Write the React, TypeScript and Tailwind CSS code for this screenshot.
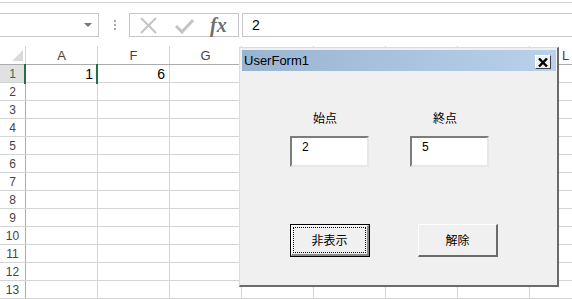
import React from 'react';

const cols = ['A', 'F', 'G', '', '', '', '', 'L'];
const rows = Array.from({ length: 13 }, (_, i) => i + 1);

function FormulaBar() {
  return (
    <div className="h-[46px] flex flex-col">
      <div className="h-[2px]" />
      <div className="h-px bg-[#d4d4d4]" />
      <div className="mt-[10px] h-[24px] flex items-stretch">
        <div className="w-[99px] shrink-0 border-y border-r border-[#c6c6c6] flex items-center justify-end pr-[6px]">
          <svg width="8" height="4" viewBox="0 0 8 4">
            <polygon points="0,0 8,0 4,4" fill="#767676" />
          </svg>
        </div>
        <div className="w-[30px] shrink-0 flex items-center justify-center">
          <svg width="3" height="12" viewBox="0 0 3 12">
            <rect x="1" y="1" width="2" height="2" fill="#a8a8a8" />
            <rect x="1" y="5" width="2" height="2" fill="#a8a8a8" />
            <rect x="1" y="9" width="2" height="2" fill="#a8a8a8" />
          </svg>
        </div>
        <div className="w-[110px] shrink-0 border border-[#c6c6c6] relative">
          <svg className="absolute left-[10px] top-[3px]" width="18" height="17" viewBox="0 0 18 17">
            <path d="M1 1 L16 16 M16 1 L1 16" stroke="#c4c4c4" strokeWidth="2" fill="none" />
          </svg>
          <svg className="absolute left-[45px] top-[4px]" width="19" height="16" viewBox="0 0 19 16">
            <path d="M1 8 L7 14 L18 2" stroke="#c4c4c4" strokeWidth="3" fill="none" />
          </svg>
          <span className="absolute left-[80px] top-[-1px] font-['Liberation_Serif',serif] italic font-bold text-[20px] leading-[24px] text-[#6f6f6f]">
            fx
          </span>
        </div>
        <div className="ml-[3px] w-[400px] shrink-0 border border-[#c6c6c6] flex items-center pl-[9px] font-['Liberation_Sans',sans-serif] text-[14px] text-black">
          2
        </div>
      </div>
      <div className="flex-1" />
    </div>
  );
}

function Grid() {
  return (
    <div className="relative font-['Liberation_Sans',sans-serif]">
      <div className="flex h-[19px] border-b border-[#ababab]">
        <div className="w-[26px] shrink-0 border-r border-[#d4d4d4] relative">
          <svg className="absolute left-[12px] top-[4px]" width="11" height="11" viewBox="0 0 11 11">
            <polygon points="11,0 11,11 0,11" fill="#dadada" />
          </svg>
        </div>
        {cols.map((c, i) => (
          <div
            key={i}
            className="w-[72px] shrink-0 border-r border-[#d4d4d4] flex items-center justify-center text-[13px] text-[#444444] leading-none"
          >
            {c}
          </div>
        ))}
      </div>
      {rows.map((r) => (
        <div key={r} className="flex h-[18px] border-b border-[#d4d4d4]">
          <div
            className={`w-[26px] shrink-0 border-r border-[#ababab] flex items-center justify-center text-[12px] leading-none ${
              r === 1 ? 'bg-[#e1e1e1] text-[#217346]' : 'text-[#444444]'
            }`}
          >
            {r}
          </div>
          {cols.map((c, ci) => (
            <div
              key={ci}
              className="w-[72px] shrink-0 border-r border-[#d4d4d4] flex items-center justify-end pr-[4px] text-[14px] leading-none text-black"
            >
              {r === 1 && ci === 0 ? '1' : r === 1 && ci === 1 ? '6' : ''}
            </div>
          ))}
        </div>
      ))}
      <div className="absolute left-[24px] top-[18px] w-[2px] h-[20px] bg-[#217346]" />
      <div className="absolute left-[96px] top-[18px] w-[2px] h-[20px] bg-[#217346]" />
    </div>
  );
}

function UserForm() {
  return (
    <div className="absolute left-[239px] top-[47px] w-[320px] h-[240px] bg-[#f0f0f0] border-l border-t border-[#dcdcdc] border-r-2 border-b-2 border-r-[#6b6b6b] border-b-[#6b6b6b] pt-[2px] pl-[2px] pr-[1px] flex flex-col">
      <div className="h-[21px] shrink-0 bg-gradient-to-r from-[#99b4d1] to-[#b9d1ea] flex items-start justify-between">
        <span className="pl-[2px] font-['Liberation_Sans',sans-serif] text-[13px] leading-[21px] text-black">
          UserForm1
        </span>
        <div className="mt-[5px] mr-[5px] w-[16px] h-[14px] bg-[#f0f0f0] border-t border-l border-white border-r border-b border-r-[#404040] border-b-[#404040] flex items-center justify-center">
          <svg width="10" height="9" viewBox="0 0 10 9">
            <path d="M1 0.5 L9 8.5 M9 0.5 L1 8.5" stroke="#000" strokeWidth="2.4" fill="none" />
          </svg>
        </div>
      </div>
      <div className="pl-[48px] font-['Noto_Sans_CJK_JP',sans-serif] text-[12px] text-black">
        <div className="mt-[38px] flex h-[18px] items-center">
          <div className="w-[120px] pl-[23px] leading-none">始点</div>
          <div className="w-[120px] pl-[23px] leading-none">終点</div>
        </div>
        <div className="mt-[9px] flex">
          <div className="w-[120px]">
            <div className="w-[79px] h-[31px] bg-white border-t-2 border-l-2 border-[#7c7c7c] border-b-2 border-r-2 border-b-[#e6e6e6] border-r-[#e6e6e6] pl-[10px] pt-[2px] font-['Liberation_Sans',sans-serif] text-[12px] leading-[14px]">
              2
            </div>
          </div>
          <div className="w-[120px]">
            <div className="w-[79px] h-[31px] bg-white border-t-2 border-l-2 border-[#7c7c7c] border-b-2 border-r-2 border-b-[#e6e6e6] border-r-[#e6e6e6] pl-[10px] pt-[2px] font-['Liberation_Sans',sans-serif] text-[12px] leading-[14px]">
              5
            </div>
          </div>
        </div>
        <div className="mt-[57px] flex gap-[48px]">
          <div className="w-[80px] h-[33px] border border-black flex">
            <div className="flex-1 flex border-t border-l border-white border-b-2 border-r-2 border-b-[#8a8a8a] border-r-[#8a8a8a] p-[1px]">
              <div className="flex-1 border border-dotted border-black flex items-center justify-center leading-none">
                非表示
              </div>
            </div>
          </div>
          <div className="w-[80px] h-[33px] flex items-center justify-center border-t border-l border-white border-b-2 border-r-2 border-b-[#6b6b6b] border-r-[#6b6b6b] leading-none">
            解除
          </div>
        </div>
      </div>
    </div>
  );
}

export default function App() {
  return (
    <div className="relative w-[572px] h-[299px] overflow-hidden bg-white">
      <FormulaBar />
      <Grid />
      <UserForm />
    </div>
  );
}
